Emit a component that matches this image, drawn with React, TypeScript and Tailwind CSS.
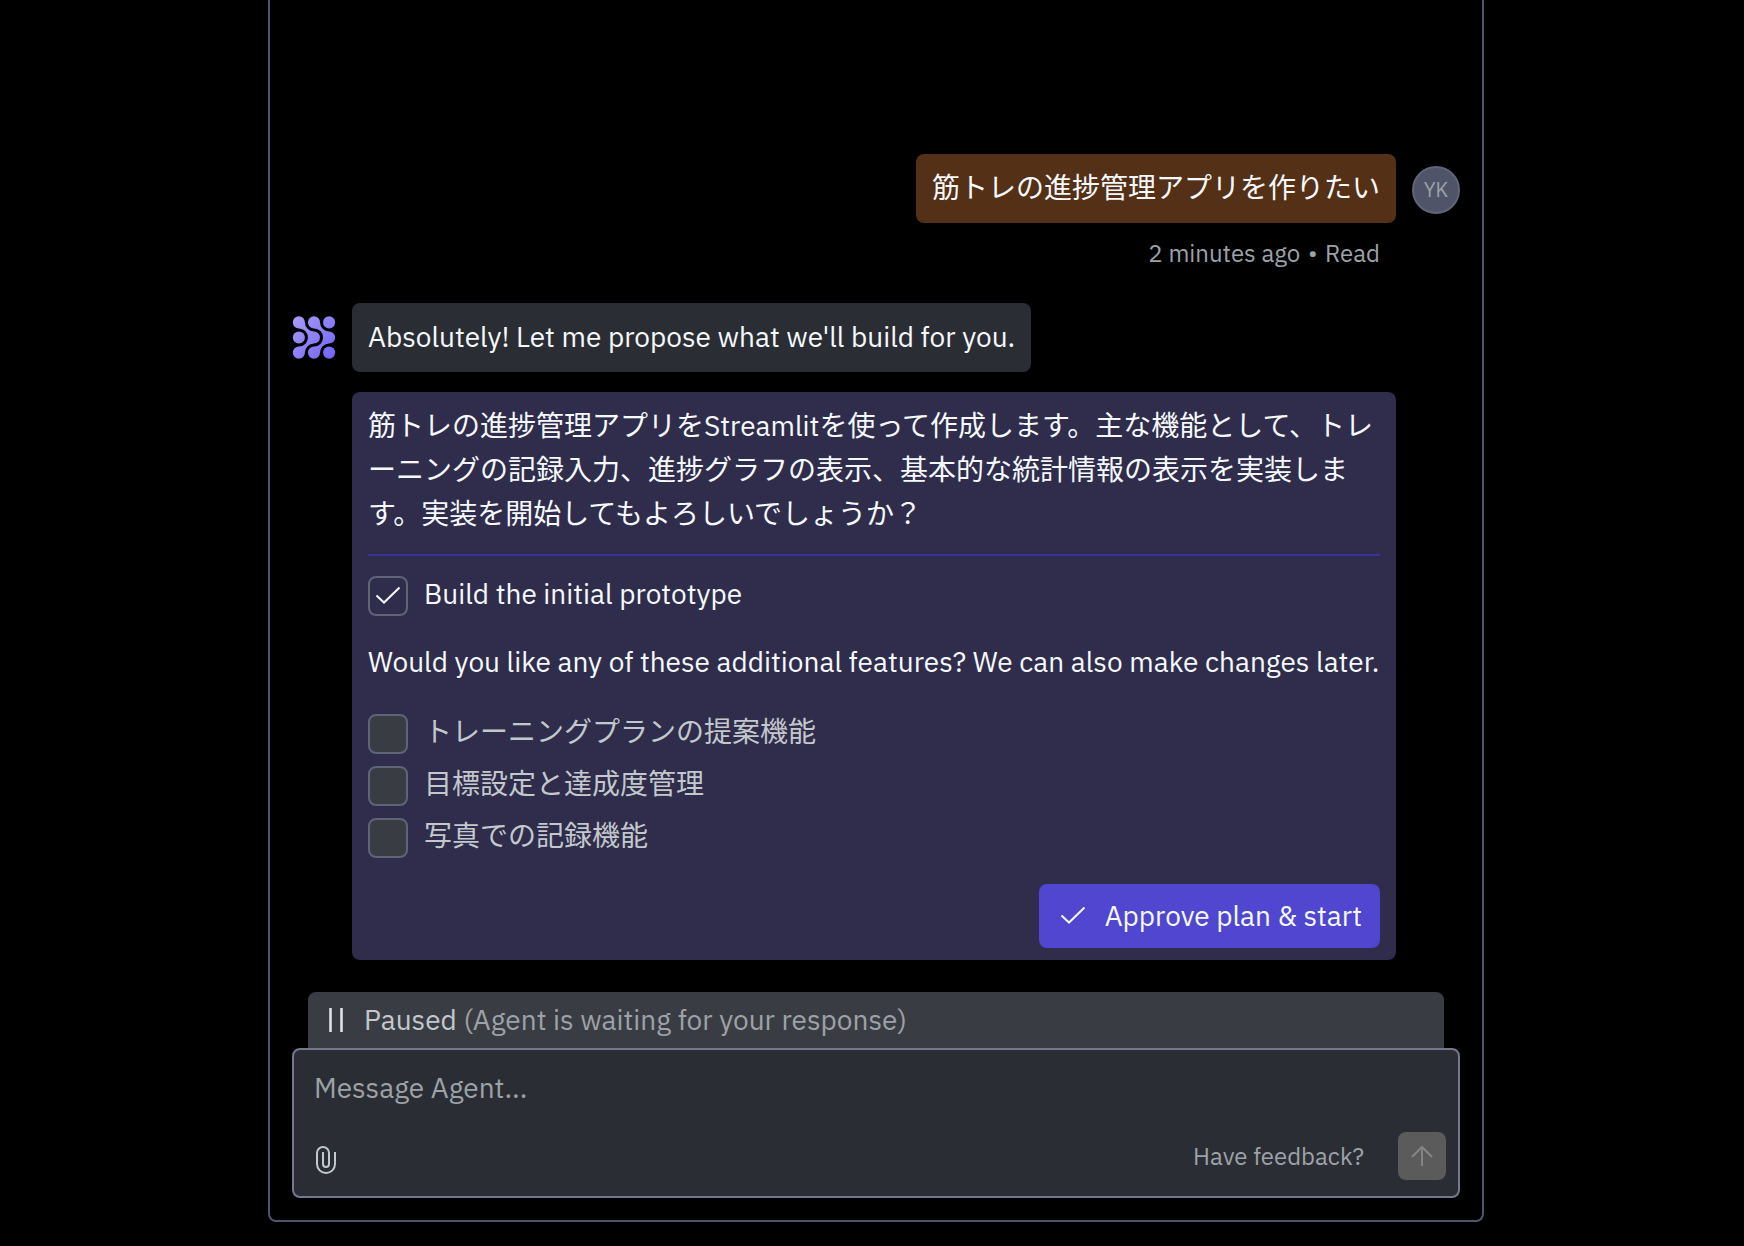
import React, { useState } from 'react';

interface Feature {
  id: string;
  label: string;
}

const FEATURES: Feature[] = [
  { id: 'plan', label: 'トレーニングプランの提案機能' },
  { id: 'goal', label: '目標設定と達成度管理' },
  { id: 'photo', label: '写真での記録機能' },
];

const CheckIcon: React.FC = () => (
  <svg viewBox="0 0 32 32" className="size-8" fill="none" stroke="currentColor" strokeWidth="2" aria-hidden="true">
    <path d="M4.5 15.5 L12 22.5 L27.5 7.5" />
  </svg>
);

const PauseIcon: React.FC = () => (
  <svg viewBox="0 0 24 24" className="size-6" fill="none" stroke="currentColor" strokeWidth="2.5" aria-hidden="true">
    <path d="M6.500 0v24M17.500 0v24" />
  </svg>
);

const PaperclipIcon: React.FC = () => (
  <svg viewBox="0 0 20 28" className="h-7 w-5" fill="none" stroke="currentColor" strokeWidth="2" aria-hidden="true">
    <path d="M19 6v12a9 9 0 0 1-18 0V7a6 6 0 0 1 12 0v11a3 3 0 0 1-6 0V6" />
  </svg>
);

const ArrowUpIcon: React.FC = () => (
  <svg viewBox="0 0 24 24" className="size-6" fill="none" stroke="currentColor" strokeWidth="2" aria-hidden="true">
    <path d="M12 22V3M2 13L12 3l10 10" />
  </svg>
);

const AgentLogo: React.FC = () => (
  <svg viewBox="0 0 128 128" className="mt-[13px] h-[43px] w-11 shrink-0" fill="url(#agent)" role="img" aria-label="Agent">
    <defs>
      <linearGradient id="agent" gradientUnits="userSpaceOnUse" x1="0" y1="0" x2="128" y2="128">
        <stop offset="0" stopColor="#a99cf9" />
        <stop offset="1" stopColor="#6f63f3" />
      </linearGradient>
    </defs>
    <path d="M37 19A27 27 0 0 0 64 46A18 18 0 0 1 64 82A27 27 0 0 0 37 109A18 18 0 1 1 19 91A27 27 0 0 0 19 37A18 18 0 1 1 37 19Z" />
    <path d="M82 19A27 27 0 0 0 109 46A18 18 0 0 1 109 82A27 27 0 0 0 82 109A18 18 0 1 1 64 91A27 27 0 0 0 64 37A18 18 0 1 1 82 19Z" />
    <circle cx="19" cy="64" r="18" />
    <circle cx="109" cy="19" r="18" />
    <circle cx="109" cy="109" r="18" />
  </svg>
);

interface CheckRowProps {
  label: string;
  checked: boolean;
  muted?: boolean;
  onChange: () => void;
}

const CheckRow: React.FC<CheckRowProps> = ({ label, checked, muted, onChange }) => (
  <label className={`flex items-center gap-4 ${muted ? 'text-[#c2c8cc]' : 'text-[#f5f9fc]'}`}>
    <span className="grid size-10 shrink-0 place-items-center">
      <input
        type="checkbox"
        checked={checked}
        onChange={onChange}
        className="col-start-1 row-start-1 size-10 appearance-none rounded-lg border-2 border-[#5f6477] bg-[#3a3c43] checked:bg-transparent"
      />
      {checked && (
        <svg
          viewBox="0 0 24 24"
          className="pointer-events-none col-start-1 row-start-1 size-6"
          fill="none"
          stroke="currentColor"
          strokeWidth="2"
          aria-hidden="true"
        >
          <path d="M0.500 11.500L8 18.500L23.500 3.500" />
        </svg>
      )}
    </span>
    <span className="-mt-1">{label}</span>
  </label>
);

const PlanCard: React.FC = () => {
  const [prototype, setPrototype] = useState(true);
  const [selected, setSelected] = useState<string[]>([]);

  const toggle = (id: string) => {
    setSelected(prev => (prev.includes(id) ? prev.filter(s => s !== id) : [...prev, id]));
  };

  return (
    <section className="rounded-lg bg-[#2f2d4b] px-4 py-3">
      <p className="[line-break:loose]">
        筋トレの進捗管理アプリをStreamlitを使って作成します。主な機能として、トレーニングの記録入力、進捗グラフの表示、基本的な統計情報の表示を実装します。実装を開始してもよろしいでしょうか？
      </p>
      <hr className="mt-[18px] mb-5 border-t-2 border-[#3c339a]" />
      <CheckRow label="Build the initial prototype" checked={prototype} onChange={() => setPrototype(!prototype)} />
      <p className="mt-6 whitespace-nowrap">Would you like any of these additional features? We can also make changes later.</p>
      <div className="mt-[30px] flex flex-col gap-3">
        {FEATURES.map(f => (
          <CheckRow key={f.id} label={f.label} checked={selected.includes(f.id)} muted onChange={() => toggle(f.id)} />
        ))}
      </div>
      <div className="mt-[26px] flex justify-end">
        <button type="button" className="flex h-16 items-center gap-4 rounded-lg bg-[#5046d0] px-[18px]">
          <CheckIcon />
          <span>Approve plan &amp; start</span>
        </button>
      </div>
    </section>
  );
};

const Composer: React.FC = () => {
  const [message, setMessage] = useState('');

  return (
    <div>
      <div className="mx-4 flex h-14 items-center gap-4 rounded-t-lg bg-[#3a3c43] px-4 text-[#9da2a6]">
        <span className="text-[#e4e7ea]">
          <PauseIcon />
        </span>
        <p>
          <span className="text-[#c2c8cc]">Paused</span> (Agent is waiting for your response)
        </p>
      </div>
      <form
        onSubmit={e => e.preventDefault()}
        className="flex flex-col gap-5 rounded-lg border-2 border-[#72788e] bg-[#2b2d35] pt-4 pr-3 pb-4 pl-5"
      >
        <textarea
          rows={1}
          value={message}
          onChange={e => setMessage(e.target.value)}
          aria-label="Message Agent"
          placeholder="Message Agent..."
          className="block h-[46px] w-full resize-none bg-transparent placeholder-[#9da2a6] outline-none"
        />
        <div className="flex items-center">
          <button type="button" aria-label="Attach file" className="mt-2 ml-0.5 text-[#c2c8cc]">
            <PaperclipIcon />
          </button>
          <a href="#feedback" className="mr-[34px] ml-auto text-2xl text-[#9da2a6]">
            Have feedback?
          </a>
          <button
            type="submit"
            aria-label="Send"
            className="flex size-12 items-center justify-center rounded-lg bg-[#5b5b5b] text-[#858585]"
          >
            <ArrowUpIcon />
          </button>
        </div>
      </form>
    </div>
  );
};

const App: React.FC = () => {
  return (
    <div className="min-h-screen bg-black pr-[260px] pb-6 pl-[268px] font-['IBM_Plex_Sans',Roboto,'Noto_Sans_CJK_JP',sans-serif] text-[28px] leading-[44px] text-[#f5f9fc]">
      <main className="flex flex-col rounded-b-lg border-2 border-t-0 border-[#4f566b] px-[22px] pt-[154px] pb-[22px]">
        <div className="flex justify-end gap-4">
          <div className="flex flex-col items-end">
            <p className="rounded-lg bg-[#533016] px-4 pt-3 pb-[13px]">筋トレの進捗管理アプリを作りたい</p>
            <p className="mt-3 pr-4 text-2xl leading-9 text-[#9da2a6]">
              2 minutes ago <span className="px-0.5">•</span> Read
            </p>
          </div>
          <div className="mt-3 flex size-12 items-center justify-center rounded-full border-2 border-[#5f6477] bg-[#4f5468] text-xl text-[#9da2a6]">
            YK
          </div>
        </div>

        <div className="mt-8 flex gap-4">
          <AgentLogo />
          <div className="mr-16 flex min-w-0 flex-1 flex-col items-start gap-5">
            <p className="rounded-lg bg-[#2b2d35] px-4 pt-3 pb-[13px]">Absolutely! Let me propose what we'll build for you.</p>
            <PlanCard />
          </div>
        </div>

        <div className="mt-8">
          <Composer />
        </div>
      </main>
    </div>
  );
};

export default App;
